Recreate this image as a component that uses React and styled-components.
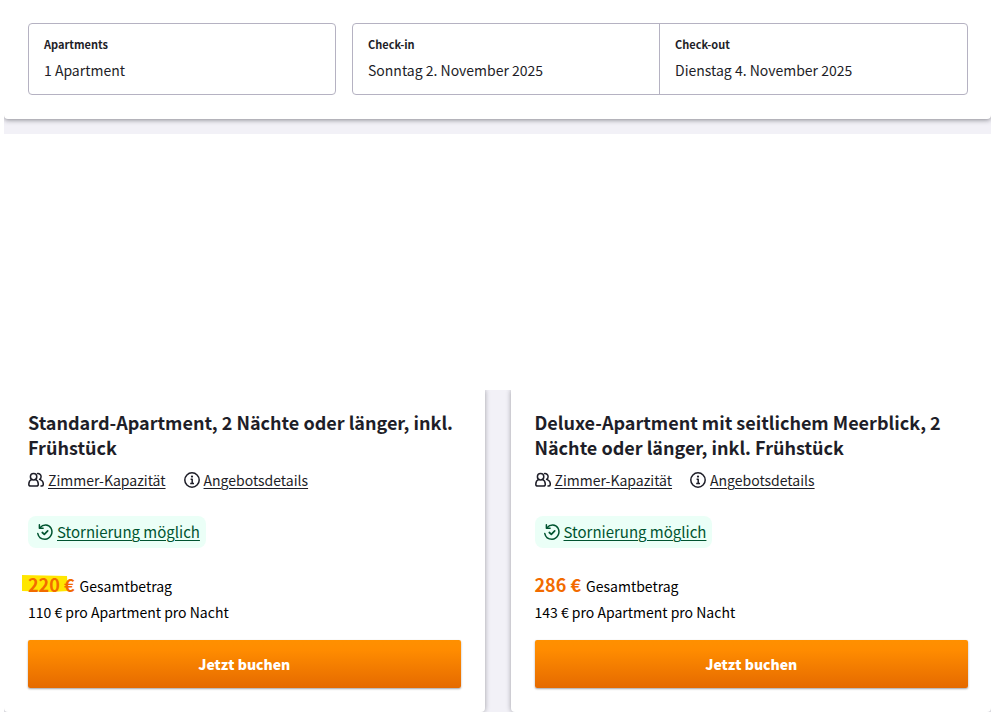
import React from "react";
import styled, { createGlobalStyle } from "styled-components";

const GlobalStyle = createGlobalStyle`
  *, *::before, *::after { box-sizing: border-box; }
  body {
    margin: 0;
    background: #fff;
    color: #1e1e28;
    font-family: "Noto Sans CJK SC", "Noto Sans", sans-serif;
    font-size: 14px;
    line-height: 24px;
  }
  button { font: inherit; color: inherit; }
`;

const Page = styled.main`
  padding: 0 2px 0 4px;
`;

const SearchArea = styled.section`
  background: #f2f1f7;
  padding-bottom: 15px;
  overflow: hidden;
`;

const SearchBar = styled.form`
  display: grid;
  grid-template-columns: 1fr 2fr;
  gap: 16px;
  padding: 23px 23px 24px 24px;
  background: #fff;
  border-radius: 0 0 4px 4px;
  box-shadow: 0 1px 5px rgba(30, 30, 40, 0.5);
`;

const FieldGroup = styled.div`
  display: grid;
  grid-template-columns: repeat(${(p) => p.$count}, 1fr);
  border: 1px solid #b5b2c2;
  border-radius: 4px;
`;

const Field = styled.button`
  display: flex;
  flex-direction: column;
  align-items: flex-start;
  height: 70px;
  padding: 12px 15px;
  border: 0;
  background: transparent;
  text-align: left;
  cursor: pointer;

  &:not(:last-child) { border-right: 1px solid #b5b2c2; }
`;

const FieldLabel = styled.span`
  font-size: 11px;
  font-weight: 700;
  line-height: 16px;
`;

const FieldValue = styled.span`
  margin-top: 6px;
  line-height: 24px;
`;

const Offers = styled.section`
  display: grid;
  grid-template-columns: 1fr 1fr;
  gap: 26px;
  margin-top: 256px;
  background: #f2f1f7;
  overflow: hidden;
`;

const Card = styled.article`
  display: flex;
  flex-direction: column;
  align-items: flex-start;
  padding: 20px 24px 24px;
  background: #fff;
  border-radius: 0 0 4px 4px;
  box-shadow: 0 0 5px rgba(30, 30, 40, 0.4);

  &:last-child { padding-right: 23px; }
`;

const Title = styled.h2`
  margin: 0;
  font-size: 18px;
  font-weight: 700;
  line-height: 25px;
`;

const Links = styled.div`
  display: flex;
  flex-wrap: wrap;
  gap: 18px;
  margin-top: 8px;
`;

const IconLink = styled.a`
  display: flex;
  align-items: center;
  gap: 4px;
  color: inherit;
  text-decoration: none;

  span {
    text-decoration: underline;
    text-decoration-thickness: 1px;
    text-underline-offset: 2px;
  }
  svg { flex: none; }
`;

const CancelLink = styled(IconLink)`
  height: 32px;
  margin-top: 24px;
  padding: 0 6px 0 9px;
  border-radius: 8px;
  background: #ebfff7;
  color: #005430;
  font-size: 15px;
`;

const PriceLine = styled.p`
  display: flex;
  align-items: baseline;
  gap: 5px;
  margin: 23px 0 0;
  line-height: 26px;
  color: #000;
`;

const Price = styled.strong`
  position: relative;
  isolation: isolate;
  color: #f26b00;
  font-size: 18px;
  font-weight: 700;
`;

const Marker = styled.svg`
  position: absolute;
  z-index: -1;
  left: -6px;
  top: 3px;
`;

const Nightly = styled.p`
  margin: 0;
  line-height: 26px;
  color: #000;
`;

const BookButton = styled.button`
  width: 100%;
  height: 48px;
  margin-top: 15px;
  border: 0;
  border-radius: 2px;
  background: linear-gradient(#ff9000, #ff8c00 20%, #e56a00);
  box-shadow: 0 1px 2px rgba(30, 30, 40, 0.4);
  color: #fff;
  font-weight: 900;
  cursor: pointer;
`;

const iconProps = {
  width: 16,
  height: 16,
  viewBox: "0 0 16 16",
  fill: "none",
  stroke: "currentColor",
  strokeWidth: 1.5,
  strokeLinecap: "round",
  strokeLinejoin: "round",
  "aria-hidden": true,
};

const GuestsIcon = () => (
  <svg {...iconProps}>
    <circle cx="5.6" cy="4.7" r="3.2" />
    <path d="M3.8 7.4C1.9 8.2.8 9.8.8 12.2c0 1.200.7 1.900 1.900 1.900h5.700c1.200 0 1.900-.7 1.900-1.900 0-2.400-1.100-4-2.900-4.800" />
    <path d="M9.600 1.600c1.900-.2 3.500 1.200 3.500 3.100 0 1.200-.6 2.100-1.500 2.700 2.200.7 3.700 2.300 3.700 4.800 0 1.200-.7 1.900-1.900 1.900h-.4" />
  </svg>
);

const InfoIcon = () => (
  <svg {...iconProps}>
    <circle cx="8" cy="8" r="7.2" />
    <path d="M6.600 7.200H8.200V11.500M6.200 11.500h3.800" strokeLinecap="butt" />
    <circle cx="8" cy="4.600" r="1.100" fill="currentColor" stroke="none" />
  </svg>
);

const RefundIcon = () => (
  <svg {...iconProps}>
    <path d="M3 3.800C6.100.1 11.700.2 14 4.200c2.600 4.600-.7 10.900-6 11-3.600 0-6.500-2.400-7.200-5.600" />
    <path d="M2.400.8v3.400h3.700" />
    <path d="M5.300 8.500l2 1.800 3.400-3.500" strokeWidth="1.700" />
  </svg>
);

const fieldGroups = [
  [{ label: "Apartments", value: "1 Apartment" }],
  [
    { label: "Check-in", value: "Sonntag 2. November 2025" },
    { label: "Check-out", value: "Dienstag 4. November 2025" },
  ],
];

const offers = [
  {
    title: "Standard-Apartment, 2 Nächte oder länger, inkl. Frühstück",
    price: "220 €",
    nightly: "110 € pro Apartment pro Nacht",
    marked: true,
  },
  {
    title: "Deluxe-Apartment mit seitlichem Meerblick, 2 Nächte oder länger, inkl. Frühstück",
    price: "286 €",
    nightly: "143 € pro Apartment pro Nacht",
  },
];

function Offer({ title, price, nightly, marked }) {
  return (
    <Card>
      <Title>{title}</Title>
      <Links>
        <IconLink href="#kapazitaet"><GuestsIcon /><span>Zimmer-Kapazität</span></IconLink>
        <IconLink href="#details"><InfoIcon /><span>Angebotsdetails</span></IconLink>
      </Links>
      <CancelLink href="#stornierung"><RefundIcon /><span>Stornierung möglich</span></CancelLink>
      <PriceLine>
        <Price>
          {marked && (
            <Marker width="46" height="19" viewBox="0 0 46 19" aria-hidden="true">
              <path d="M0 1L45 2L46 17L30 18L0 17Z" fill="#ffe600" />
            </Marker>
          )}
          {price}
        </Price>
        <span>Gesamtbetrag</span>
      </PriceLine>
      <Nightly>{nightly}</Nightly>
      <BookButton type="button">Jetzt buchen</BookButton>
    </Card>
  );
}

export default function App() {
  return (
    <>
      <GlobalStyle />
      <Page>
        <SearchArea>
          <SearchBar>
            {fieldGroups.map((group) => (
              <FieldGroup key={group[0].label} $count={group.length}>
                {group.map((field) => (
                  <Field type="button" key={field.label}>
                    <FieldLabel>{field.label}</FieldLabel>
                    <FieldValue>{field.value}</FieldValue>
                  </Field>
                ))}
              </FieldGroup>
            ))}
          </SearchBar>
        </SearchArea>
        <Offers>
          {offers.map((offer) => <Offer key={offer.title} {...offer} />)}
        </Offers>
      </Page>
    </>
  );
}
